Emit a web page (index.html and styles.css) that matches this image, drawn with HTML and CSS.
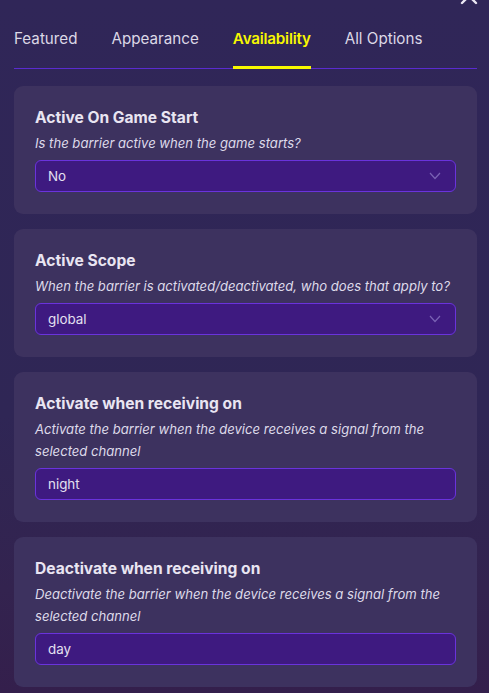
FILE: index.html
```html
<!DOCTYPE html>
<html>
<head>
<meta charset="utf-8">
<link rel="stylesheet" href="styles.css">
</head>
<body>
<div class="page">
  <svg class="close" width="20" height="20" viewBox="0 0 20 20"><path d="M3 3 L17 17 M17 3 L3 17" stroke="#ece8f4" stroke-width="2.4" stroke-linecap="round"/></svg>
  <nav class="tabs">
    <div class="tab">Featured</div>
    <div class="tab">Appearance</div>
    <div class="tab active">Availability</div>
    <div class="tab">All Options</div>
  </nav>
  <div class="cards">
    <section class="card">
      <h2 class="title">Active On Game Start</h2>
      <p class="desc">Is the barrier active when the game starts?</p>
      <div class="field select">No<svg class="chev" width="12" height="8" viewBox="0 0 12 8"><path d="M1 1 L6 6.5 L11 1" fill="none" stroke="#7a62b4" stroke-width="1.2"/></svg></div>
    </section>
    <section class="card">
      <h2 class="title">Active Scope</h2>
      <p class="desc">When the barrier is activated/deactivated, who does that apply to?</p>
      <div class="field select">global<svg class="chev" width="12" height="8" viewBox="0 0 12 8"><path d="M1 1 L6 6.5 L11 1" fill="none" stroke="#7a62b4" stroke-width="1.2"/></svg></div>
    </section>
    <section class="card">
      <h2 class="title">Activate when receiving on</h2>
      <p class="desc">Activate the barrier when the device receives a signal from the selected channel</p>
      <div class="field">night</div>
    </section>
    <section class="card">
      <h2 class="title">Deactivate when receiving on</h2>
      <p class="desc">Deactivate the barrier when the device receives a signal from the selected channel</p>
      <div class="field">day</div>
    </section>
  </div>
</div>
</body>
</html>
```
FILE: styles.css
```css
html, body {
  margin: 0;
  padding: 0;
}
body {
  width: 489px;
  height: 693px;
  overflow: hidden;
  background: linear-gradient(180deg, #302658 0%, #2f2655 60%, #33234f 85%, #341f4c 100%);
  font-family: Inter, "Noto Sans", sans-serif;
  color: #e9e5f2;
}
.page {
  position: relative;
  padding: 0 12px 0 14px;
}
.close {
  position: absolute;
  right: 10px;
  top: -14px;
}
.tabs {
  display: flex;
  height: 69px;
  border-bottom: 1px solid #5a2bd0;
  box-sizing: border-box;
  align-items: stretch;
}
.tab {
  font-size: 15.2px;
  line-height: 20px;
  padding-top: 29px;
  box-sizing: border-box;
  color: #dcd8e6;
  margin-right: 34px;
  position: relative;
}
.tab.active {
  color: #f8f800;
  font-weight: 600;
  letter-spacing: -0.2px;
}
.tab.active::after {
  content: "";
  position: absolute;
  left: 0;
  right: 0;
  bottom: -1px;
  height: 3px;
  background: #f8f800;
}
.cards {
  display: flex;
  flex-direction: column;
  gap: 15px;
  padding-top: 17px;
}
.card {
  background: #3d325f;
  border-radius: 9px;
  padding: 22px 21px;
}
.title {
  margin: 0;
  font-size: 15.6px;
  line-height: 20px;
  font-weight: 700;
  color: #e9e5f2;
}
.desc {
  margin: 4px 0 6px;
  font-size: 13.1px;
  line-height: 22px;
  font-style: italic;
  color: #dedaea;
}
.field {
  height: 32px;
  box-sizing: border-box;
  border: 1px solid #6a33dc;
  border-radius: 6px;
  background: #3e1a80;
  padding: 0 12px;
  display: flex;
  align-items: center;
  justify-content: space-between;
  font-size: 13.4px;
  color: #e4e0f0;
}
.chev {
  margin-right: 2px;
}
```
